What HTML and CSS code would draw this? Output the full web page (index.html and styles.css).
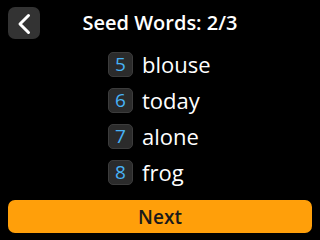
FILE: index.html
```html
<!DOCTYPE html>
<html lang="en">
<head>
    <meta charset="UTF-8">
    <title>Seed Words</title>
    <link rel="stylesheet" href="styles.css">
</head>
<body>

    <div class="screen">
        <div class="header">
            <div class="back-btn">
                <svg width="32" height="32" viewBox="0 0 32 32">
                    <path d="M20.5 8.5 L12 17 L20.5 25.5" fill="none" stroke="#fff" stroke-width="3" stroke-linecap="round" stroke-linejoin="round"/>
                </svg>
            </div>
            <h1 class="title">Seed Words: 2/3</h1>
            <div></div>
        </div>

        <div class="word-list">
            <div class="word-row"><span class="num">5</span><span class="word">blouse</span></div>
            <div class="word-row"><span class="num">6</span><span class="word">today</span></div>
            <div class="word-row"><span class="num">7</span><span class="word">alone</span></div>
            <div class="word-row"><span class="num">8</span><span class="word">frog</span></div>
        </div>

        <button class="button">Next</button>
    </div>

</body>
</html>
```

FILE: styles.css
```css
body {
    margin: 0;
    background: #000;
    font-family: "Open Sans", sans-serif;
    color: #fff;
}

.screen {
    width: 320px;
    height: 240px;
    display: flex;
    flex-direction: column;
}

.header {
    display: grid;
    grid-template-columns: 32px 1fr 32px;
    align-items: center;
    height: 32px;
    padding: 7px 8px 0 8px;
}

.back-btn {
    width: 32px;
    height: 32px;
    border-radius: 7px;
    background: #333;
}

.back-btn svg {
    display: block;
}

.title {
    margin: 0;
    text-align: center;
    font-size: 20px;
    font-weight: 600;
    line-height: 32px;
}

.word-list {
    display: flex;
    flex-direction: column;
    gap: 11px;
    padding-left: 108px;
    margin-top: 13px;
}

.word-row {
    display: flex;
    align-items: center;
    gap: 9px;
    height: 25px;
}

.num {
    width: 23px;
    height: 23px;
    border: 1px solid #3c3c3c;
    border-radius: 5px;
    background: #2b2b2b;
    color: #47b2f5;
    font-size: 19px;
    line-height: 23px;
    text-align: center;
}

.word {
    font-size: 22px;
    line-height: 25px;
}

.button {
    margin: 15px 8px 0 8px;
    height: 33px;
    border: none;
    border-radius: 7px;
    background: #ff9f0a;
    color: #1a1a1a;
    font-family: "Open Sans", sans-serif;
    font-size: 19px;
    font-weight: 600;
    padding: 0;
}
```
